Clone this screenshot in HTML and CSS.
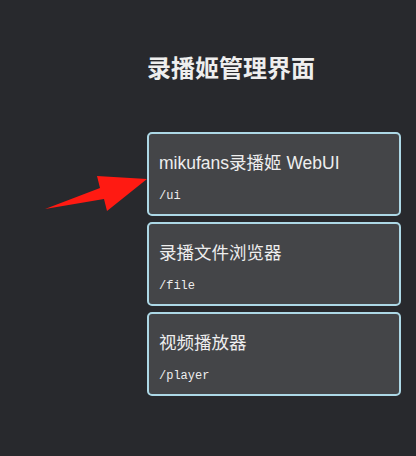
FILE: index.html
```html
<!DOCTYPE html>
<html lang="zh-CN">
<head>
    <meta charset="UTF-8">
    <meta name="viewport" content="width=device-width, initial-scale=1.0">
    <title>录播姬管理界面</title>
    <link rel="stylesheet" href="styles.css">
</head>
<body>
    <div class="container">
        <h1>录播姬管理界面</h1>
        <div class="links">
            <a class="card" href="/ui">
                <span class="card-title">mikufans录播姬 WebUI</span>
                <code>/ui</code>
            </a>
            <a class="card" href="/file">
                <span class="card-title">录播文件浏览器</span>
                <code>/file</code>
            </a>
            <a class="card" href="/player">
                <span class="card-title">视频播放器</span>
                <code>/player</code>
            </a>
        </div>
    </div>

    <!-- annotation arrow -->
    <svg class="arrow" width="110" height="40" viewBox="40 174 110 40">
        <polygon points="45,209 100,188 97,176 147,179 107,211 104,199" fill="#ff1a12"/>
    </svg>
</body>
</html>
```

FILE: styles.css
```css
body {
    margin: 0;
    background-color: #28292d;
    color: #eeeeee;
    font-family: "Liberation Sans", "Noto Sans CJK SC", sans-serif;
    position: relative;
    min-height: 456px;
}
.container {
    margin-left: 147px;
    width: 254px;
    padding-top: 51px;
}
h1 {
    margin: 0 0 49px 0;
    font-size: 24px;
    line-height: 32px;
    font-weight: bold;
    font-family: "Noto Sans CJK SC", sans-serif;
}
.links {
    display: flex;
    flex-direction: column;
    gap: 6px;
}
.card {
    display: flex;
    flex-direction: column;
    height: 84px;
    box-sizing: border-box;
    padding: 17px 10px 0 10px;
    background: #444548;
    border: 2px solid #add8e6;
    border-radius: 5px;
    color: #eeeeee;
    text-decoration: none;
}
.card-title {
    font-size: 17.5px;
    line-height: 25px;
}
.card code {
    margin-top: 12px;
    font-family: "Liberation Mono", monospace;
    font-size: 12px;
    line-height: 16px;
}
.arrow {
    position: absolute;
    left: 40px;
    top: 174px;
}
```
